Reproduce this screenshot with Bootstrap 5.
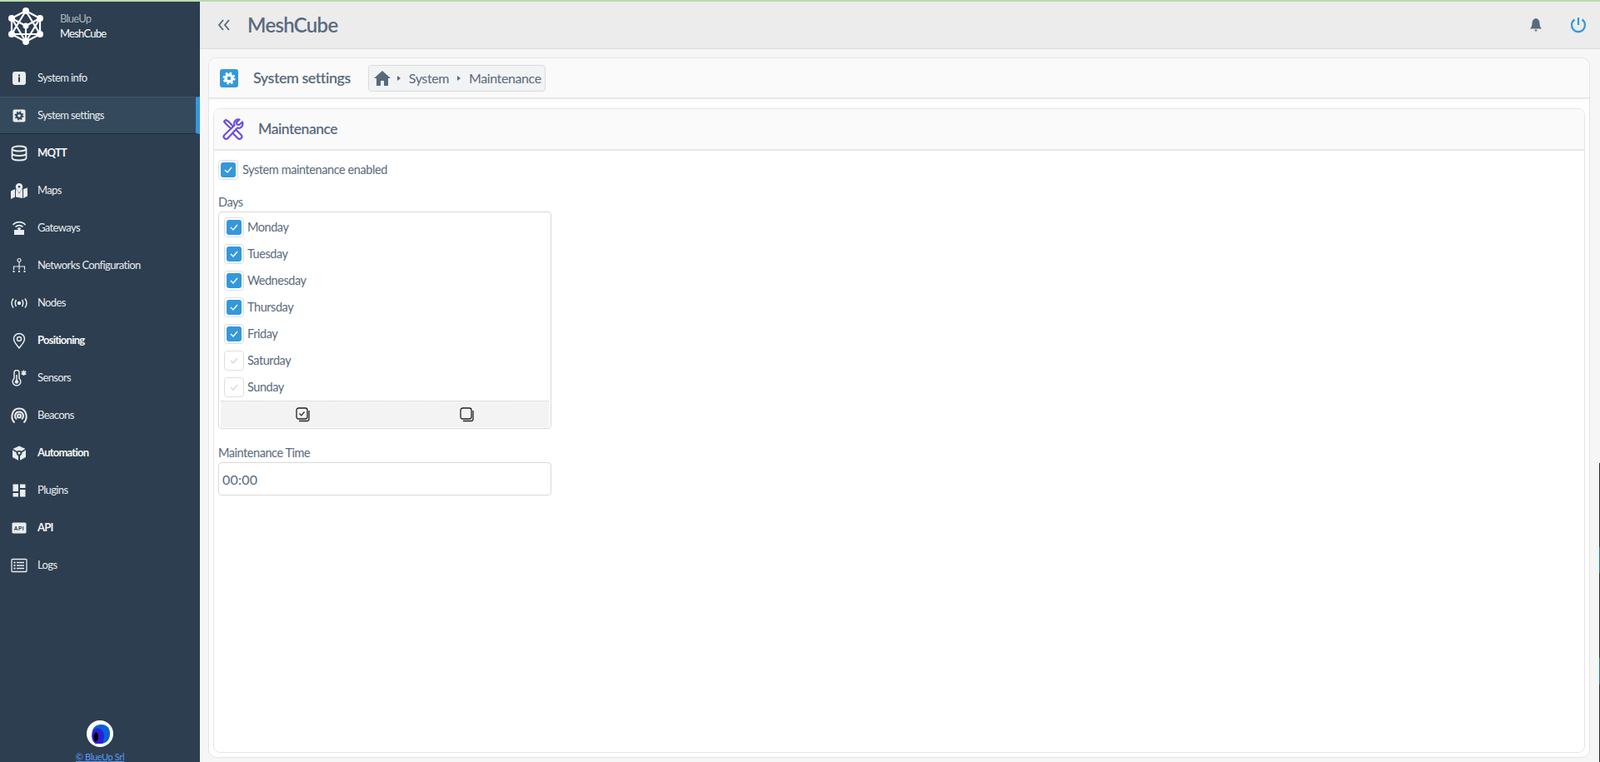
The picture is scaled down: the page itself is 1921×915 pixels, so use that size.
<!DOCTYPE html>
<html lang="en">
<head>
<meta charset="utf-8">
<title>MeshCube</title>
<link href="https://cdn.jsdelivr.net/npm/bootstrap@5.3.0/dist/css/bootstrap.min.css" rel="stylesheet">
<style>
html,body{height:100%;}
body{font-family:"Lato","Liberation Sans",sans-serif;color:#5a6a7d;background:#f6f6f6;overflow:hidden;font-size:15px;border-top:2px solid #b9dbac;}
.shell{height:913px;}
.side{width:240px;background:#2c3e50;color:#fff;flex:none;}
.brand{height:58px;padding-left:9px;}
.brand-txt{font-size:13px;line-height:18px;margin-left:19px;letter-spacing:-.75px;}
.brand-top{color:#aab4bd;}
.brand-mark{width:44px;height:46px;}
.menu{margin-top:11px;}
.menu-row{height:45px;border-top:1px solid transparent;border-bottom:1px solid transparent;color:#e9ecef;font-size:13px;letter-spacing:-.62px;text-decoration:none;padding-left:13px;}
.menu-row.cur{background:#34495c;border-top-color:#41546a;border-bottom-color:#1f2f3f;border-right:5px solid #3498db;}
.menu-row.hvy{font-weight:700;color:#f4f6f7;letter-spacing:-.75px;}
.menu-ico{width:20px;height:20px;margin-right:12px;flex:none;color:#e9ecef;}
.foot{font-size:11px;line-height:12px;}
.foot a{color:#5b9cf5;letter-spacing:-.35px;margin-top:6px;}
.globe{width:32px;height:32px;border-radius:50%;background:#fff;}
.top-bar{height:57px;background:#ececec;border-bottom:1px solid #dcdde6;padding:0 16px 0 21px;flex:none;}
.app-name{font-size:24px;font-weight:600;color:#5a6a7d;margin-left:20px;letter-spacing:-.7px;}
.power-ico{margin-left:33px;}
.page-pane{padding:10px 12px 5px 10px;}
.outer-card{border:1px solid #e5e5e5;border-radius:10px;background:#fff;overflow:hidden;}
.outer-head{height:49px;background:#fafafa;border-bottom:2px solid #e6e8ec;padding-left:13px;flex:none;}
.sec-title{font-size:18px;font-weight:600;margin-left:18px;letter-spacing:-.5px;}
.crumbs{margin-left:21px;height:32px;background:#f2f3f4;border:1px solid #d9dbdd;border-radius:4px;padding:0 4px 0 6px;font-size:16px;letter-spacing:-.4px;}
.crumb-sep{width:0;height:0;border-left:4px solid #5a6a7d;border-top:3px solid transparent;border-bottom:3px solid transparent;margin:0 10px;}
.inner-pane{padding:11px 5px 5px 5px;}
.inner-card{border:1px solid #e5e5e5;border-radius:8px;background:#fff;overflow:hidden;}
.inner-head{height:50px;background:#fafafa;border-bottom:2px solid #e6e8ec;padding-left:10px;flex:none;}
.inner-title{font-size:17.5px;font-weight:600;margin-left:17px;letter-spacing:-.5px;}
.inner-body{padding:11px 5px 9px;font-size:14.5px;}
.chk-wrap{width:24px;height:24px;border:1px solid #dcdfe2;border-radius:4px;background:#fff;flex:none;}
.chk-on{width:18px;height:18px;border-radius:3px;background:#3498db;}
.master-txt{margin-left:5px;letter-spacing:-.42px;}
.fld-label{margin-top:17px;height:20px;line-height:20px;font-size:14.5px;letter-spacing:-.45px;}
.fld-label.later{margin-top:19px;}
.day-box{width:400px;border:1px solid #d9d9d9;border-radius:4px;margin-top:1px;padding:2px 2px 1px 2px;}
.day-row{height:32px;padding-left:4px;font-size:14.5px;letter-spacing:-.45px;}
.day-row .day-name{margin-left:4px;}
.day-tools{height:32px;background:#f3f3f3;border-top:1px dotted #cfcfcf;}
.day-tool{flex:1 1 0;}
.time-inp{width:400px;height:40px;border:1px solid #d9d9d9;border-radius:4px;background:#fff;padding:0 4px;font-size:16px;color:#5a6a7d;letter-spacing:.2px;margin-top:1px;}
.edge-strip{position:fixed;right:0;top:556px;bottom:0;width:1px;background:linear-gradient(#2a2a2a 0 101px,#0a6ce0 101px 132px,#2a2a2a 132px 234px,#0a6ce0 234px 266px,#2a2a2a 266px);}
</style>
</head>
<body>
<div class="shell d-flex">
<aside class="side d-flex flex-column">
 <div class="brand d-flex align-items-center">
  <svg class="brand-mark" viewBox="0 0 44 46" fill="none" stroke="#fff" stroke-width="2.200"><path d="M22 5 39 14V33L22 42 5 33V14ZM22 5 5 33H39ZM22 5 39 33M5 14 22 23 39 14M22 23V42M5 14 22 42 39 14"/><g fill="#fff" stroke="none"><circle cx="22" cy="5" r="4"/><circle cx="39" cy="14" r="4"/><circle cx="39" cy="33" r="4"/><circle cx="22" cy="42" r="4"/><circle cx="5" cy="33" r="4"/><circle cx="5" cy="14" r="4"/><circle cx="22" cy="23" r="3.500"/></g></svg>
  <div class="brand-txt"><div class="brand-top">BlueUp</div><div>MeshCube</div></div>
 </div>
 <nav class="menu d-flex flex-column">
  <a class="menu-row d-flex align-items-center"><svg class="menu-ico" viewBox="0 0 20 20"><rect x="2" y="2" width="16" height="16" rx="3" fill="currentColor"/><rect x="9" y="8.500" width="2" height="6" fill="#2c3e50"/><rect x="9" y="5.500" width="2" height="2" fill="#2c3e50"/></svg>System info</a>
  <a class="menu-row cur d-flex align-items-center"><svg class="menu-ico" viewBox="0 0 20 20"><rect x="2.500" y="2.500" width="15" height="15" rx="2" fill="currentColor"/><circle cx="10" cy="10" r="4.700" fill="none" stroke="#34495c" stroke-width="1.600" stroke-dasharray="1.840 1.840"/><circle cx="10" cy="10" r="4.200" fill="#34495c"/><circle cx="10" cy="10" r="1.800" fill="#e9ecef"/></svg>System settings</a>
  <a class="menu-row hvy d-flex align-items-center"><svg class="menu-ico" viewBox="0 0 20 20" fill="none" stroke="currentColor" stroke-width="1.800"><ellipse cx="10" cy="4.500" rx="8.500" ry="3"/><path d="M1.500 4.500V15.500C1.500 17.200 5 18.500 10 18.500S18.500 17.200 18.500 15.500V4.500M1.500 10C1.500 11.700 5 13 10 13S18.500 11.700 18.500 10"/></svg>MQTT</a>
  <a class="menu-row d-flex align-items-center"><svg class="menu-ico" viewBox="0 0 20 20" fill="currentColor"><path d="M0 10.500 5 8V17.500L0 20ZM15 8 20 6.500V16.500L15 19ZM6 8.200 7 8.700 10 13.500 13 8.700 14 8.200V19L6 17.500Z"/><path fill-rule="evenodd" d="M10 1a4.300 4.300 0 0 1 4.300 4.300c0 2-2.300 5-4.300 7.200C8 10.300 5.700 7.300 5.700 5.300A4.300 4.300 0 0 1 10 1Zm0 3a1.300 1.300 0 1 0 0 2.600 1.300 1.300 0 0 0 0-2.600Z"/></svg>Maps</a>
  <a class="menu-row d-flex align-items-center"><svg class="menu-ico" viewBox="0 0 20 20" fill="none" stroke="currentColor" stroke-width="1.700"><path d="M2.500 6C6.500 1.500 13.500 1.500 17.500 6M5.500 8.500C8 6 12 6 14.500 8.500M8 10.800C9 9.900 11 9.900 12 10.800"/><path d="M4 12H9V10.500H11V12H16V18H4Z" fill="currentColor" stroke="none"/></svg>Gateways</a>
  <a class="menu-row d-flex align-items-center"><svg class="menu-ico" viewBox="0 0 20 20" fill="none" stroke="currentColor" stroke-width="1.200"><circle cx="10" cy="3.500" r="2"/><path d="M10 5.500V11M3.500 15V11H16.500V15M10 11V15"/><g fill="currentColor" stroke="none"><rect x="2.500" y="16" width="2" height="2"/><rect x="9" y="16" width="2" height="2"/><rect x="15.500" y="16" width="2" height="2"/></g></svg>Networks Configuration</a>
  <a class="menu-row d-flex align-items-center"><svg class="menu-ico" viewBox="0 0 20 20" fill="none" stroke="currentColor" stroke-width="1.500"><circle cx="10" cy="10" r="2.200" fill="currentColor" stroke="none"/><path d="M6.500 6C5 8.500 5 11.500 6.500 14M13.500 6C15 8.500 15 11.500 13.500 14M3 4.500C.5 8 .5 12 3 15.500M17 4.500C19.500 8 19.500 12 17 15.500"/></svg>Nodes</a>
  <a class="menu-row hvy d-flex align-items-center"><svg class="menu-ico" viewBox="0 0 20 20" fill="none" stroke="currentColor" stroke-width="1.500"><path d="M10 19C6.500 14.500 3.500 11.500 3.500 8a6.500 6.500 0 0 1 13 0C16.500 11.500 13.500 14.500 10 19Z"/><circle cx="10" cy="8" r="2.500"/></svg>Positioning</a>
  <a class="menu-row d-flex align-items-center"><svg class="menu-ico" viewBox="0 0 20 20" fill="none" stroke="currentColor" stroke-width="1.500"><path d="M4 3.500a3 3 0 0 1 6 0V10.500a4.800 4.800 0 1 1-6 0Z"/><path d="M7 6V14"/><circle cx="7" cy="14.500" r="2.200" fill="currentColor" stroke="none"/><path d="M15.500 .5V7M12.700 2 18.300 5.500M18.300 2 12.700 5.500" stroke-width="1.500"/></svg>Sensors</a>
  <a class="menu-row d-flex align-items-center"><svg class="menu-ico" viewBox="0 0 20 20" fill="none" stroke="currentColor" stroke-width="2"><path d="M4.500 18.500C-1 13.500 1 1.500 10 1.500S21 13.500 15.500 18.500M7 14.500C3.500 11.500 5 5.500 10 5.500S16.500 11.500 13 14.500"/><circle cx="10" cy="10.500" r="2"/></svg>Beacons</a>
  <a class="menu-row hvy d-flex align-items-center"><svg class="menu-ico" viewBox="0 0 20 20" fill="currentColor"><path d="M10 1.500 17.500 5 12.800 7.700C11 6.700 9 6.700 7.200 7.700L2.500 5ZM2 6.500 6.500 9.200C6.500 11 7.500 12.500 9 13.500V18.800L2 15ZM18 6.500V15L11 18.800V13.500C12.500 12.500 13.500 11 13.500 9.200Z"/><circle cx="10" cy="10" r="1.500"/></svg>Automation</a>
  <a class="menu-row d-flex align-items-center"><svg class="menu-ico" viewBox="0 0 20 20" fill="currentColor"><rect x="2.500" y="2.500" width="6.500" height="8.500"/><rect x="11" y="2.500" width="6.500" height="4.500"/><rect x="2.500" y="13" width="6.500" height="4.500"/><rect x="11" y="9" width="6.500" height="8.500"/></svg>Plugins</a>
  <a class="menu-row hvy d-flex align-items-center"><svg class="menu-ico" viewBox="0 0 20 20"><rect x="1.500" y="3.500" width="17" height="13" rx="1.500" fill="#e9ecef"/><text x="10" y="12.800" text-anchor="middle" font-size="6.500" font-weight="700" font-family="Liberation Sans,sans-serif" fill="#2c3e50" letter-spacing=".5">API</text></svg>API</a>
  <a class="menu-row d-flex align-items-center"><svg class="menu-ico" viewBox="0 0 20 20" fill="none" stroke="currentColor" stroke-width="1.300"><rect x="1" y="2.500" width="18" height="15" rx="1"/><path d="M7 6.500H16M7 10H16M7 13.500H16" stroke-width="1.600"/><g fill="currentColor" stroke="none"><rect x="3.500" y="5.500" width="2" height="2"/><rect x="3.500" y="9" width="2" height="2"/><rect x="3.500" y="12.500" width="2" height="2"/></g></svg>Logs</a>
 </nav>
 <div class="foot mt-auto text-center d-flex flex-column align-items-center">
  <div class="globe d-flex align-items-center justify-content-center"><svg width="25" height="25" viewBox="0 0 25 25"><path d="M3 8C5 2 10 1 14 1 21 1 24 6 24 12 24 19 20 24 13 24H7C3 22 2 14 3 8Z" fill="#0a60d8"/><path d="M3 10C5 4 15 3 17 14 17 18 16 22 15 24H7C3 22 1 16 3 10Z" fill="#2a1fd8"/><path d="M6 11C8 9 10 12 10 16 10 20 8 22 6 21 4 19 4 13 6 11Z" fill="#000"/></svg></div>
  <a href="#">© BlueUp Srl</a>
 </div>
</aside>
<main class="flex-grow-1 d-flex flex-column">
 <header class="top-bar d-flex align-items-center">
  <svg width="16" height="14" viewBox="0 0 16 14" fill="none" stroke="#5a6a7d" stroke-width="1.900"><path d="M7 1 2 7 7 13M14 1 9 7 14 13"/></svg>
  <div class="app-name">MeshCube</div>
  <svg class="ms-auto" width="16" height="18" viewBox="0 0 16 18" fill="#5a6a7d"><path d="M8 1C5 1.500 3.500 4 3.500 7 3.500 10 2.500 12 1 13.500H15C13.500 12 12.500 10 12.500 7 12.500 4 11 1.500 8 1Z"/><rect x="6.500" y="14.500" width="3" height="2" rx="1"/></svg>
  <svg class="power-ico" width="20" height="20" viewBox="0 0 20 20" fill="none" stroke="#3498db" stroke-width="2.200"><path d="M5.500 3.500a8 8 0 1 0 9 0M10 1V10"/></svg>
 </header>
 <div class="page-pane flex-grow-1 d-flex flex-column">
  <div class="outer-card flex-grow-1 d-flex flex-column">
   <div class="outer-head d-flex align-items-center">
    <svg width="22" height="22" viewBox="0 0 22 22"><rect x="0" y="0" width="22" height="22" rx="3" fill="#3498db"/><circle cx="11" cy="11" r="6.300" fill="none" stroke="#fff" stroke-width="2.400" stroke-dasharray="2.470 2.470"/><circle cx="11" cy="11" r="5.700" fill="#fff"/><circle cx="11" cy="11" r="2.300" fill="#3498db"/></svg>
    <div class="sec-title">System settings</div>
    <div class="crumbs d-flex align-items-center">
     <svg width="20" height="18" viewBox="0 0 20 18" fill="#5a6a7d"><path d="M10 0 20 9H17V18H12V12H8V18H3V9H0Z"/></svg>
     <span class="crumb-sep ms-2"></span><span>System</span><span class="crumb-sep"></span><span>Maintenance</span>
    </div>
   </div>
   <div class="inner-pane flex-grow-1 d-flex flex-column">
    <div class="inner-card flex-grow-1 d-flex flex-column">
     <div class="inner-head d-flex align-items-center">
      <svg width="26" height="26" viewBox="0 0 26 26" fill="none" stroke="#6a4ee0" stroke-width="2.200" stroke-linejoin="round" stroke-linecap="round"><path d="M2 4 4 2 7.500 4 13.500 10.500 11 13 5 7.500Z"/><path d="M15.500 13 22.500 20A2.800 2.800 0 0 1 18.500 24L11.500 17"/><path d="M24 4.500 20 8 17.500 7.500 17 5 20.500 1.500C16.500 .5 13 4 14.500 8.500L2.500 20A2.800 2.800 0 0 0 6.500 24L18 11.500C22 13 25.500 9 24 4.500Z" fill="#fafafa"/></svg>
      <div class="inner-title">Maintenance</div>
     </div>
     <div class="inner-body">
      <div class="d-flex align-items-center">
       <span class="chk-wrap d-flex align-items-center justify-content-center"><span class="chk-on d-flex align-items-center justify-content-center"><svg width="10" height="8" viewBox="0 0 10 8" fill="none" stroke="#fff" stroke-width="1.400"><path d="M1 4 4 7 9 1"/></svg></span></span>
       <span class="master-txt">System maintenance enabled</span>
      </div>
      <div class="fld-label">Days</div>
      <div class="day-box">
       <div class="day-row d-flex align-items-center"><span class="chk-wrap d-flex align-items-center justify-content-center"><span class="chk-on d-flex align-items-center justify-content-center"><svg width="10" height="8" viewBox="0 0 10 8" fill="none" stroke="#fff" stroke-width="1.400"><path d="M1 4 4 7 9 1"/></svg></span></span><span class="day-name">Monday</span></div>
       <div class="day-row d-flex align-items-center"><span class="chk-wrap d-flex align-items-center justify-content-center"><span class="chk-on d-flex align-items-center justify-content-center"><svg width="10" height="8" viewBox="0 0 10 8" fill="none" stroke="#fff" stroke-width="1.400"><path d="M1 4 4 7 9 1"/></svg></span></span><span class="day-name">Tuesday</span></div>
       <div class="day-row d-flex align-items-center"><span class="chk-wrap d-flex align-items-center justify-content-center"><span class="chk-on d-flex align-items-center justify-content-center"><svg width="10" height="8" viewBox="0 0 10 8" fill="none" stroke="#fff" stroke-width="1.400"><path d="M1 4 4 7 9 1"/></svg></span></span><span class="day-name">Wednesday</span></div>
       <div class="day-row d-flex align-items-center"><span class="chk-wrap d-flex align-items-center justify-content-center"><span class="chk-on d-flex align-items-center justify-content-center"><svg width="10" height="8" viewBox="0 0 10 8" fill="none" stroke="#fff" stroke-width="1.400"><path d="M1 4 4 7 9 1"/></svg></span></span><span class="day-name">Thursday</span></div>
       <div class="day-row d-flex align-items-center"><span class="chk-wrap d-flex align-items-center justify-content-center"><span class="chk-on d-flex align-items-center justify-content-center"><svg width="10" height="8" viewBox="0 0 10 8" fill="none" stroke="#fff" stroke-width="1.400"><path d="M1 4 4 7 9 1"/></svg></span></span><span class="day-name">Friday</span></div>
       <div class="day-row d-flex align-items-center"><span class="chk-wrap d-flex align-items-center justify-content-center"><svg width="10" height="8" viewBox="0 0 10 8" fill="none" stroke="#d5d8db" stroke-width="1.400"><path d="M1 4 4 7 9 1"/></svg></span><span class="day-name">Saturday</span></div>
       <div class="day-row d-flex align-items-center"><span class="chk-wrap d-flex align-items-center justify-content-center"><svg width="10" height="8" viewBox="0 0 10 8" fill="none" stroke="#d5d8db" stroke-width="1.400"><path d="M1 4 4 7 9 1"/></svg></span><span class="day-name">Sunday</span></div>
       <div class="day-tools d-flex">
        <div class="day-tool d-flex align-items-center justify-content-center"><svg width="18" height="18" viewBox="0 0 18 18" fill="none" stroke="#222" stroke-width="1.300"><rect x="1" y="1" width="13" height="13" rx="2.500" fill="#f3f3f3"/><path d="M16 4V14A2.500 2.500 0 0 1 13.500 16.500H4"/><path d="M4.500 7.500 6.800 9.800 10.500 5.500" stroke-width="1.200"/></svg></div>
        <div class="day-tool d-flex align-items-center justify-content-center"><svg width="18" height="18" viewBox="0 0 18 18" fill="none" stroke="#222" stroke-width="1.300"><rect x="1" y="1" width="13" height="13" rx="2.500" fill="#f3f3f3"/><path d="M16 4V14A2.500 2.500 0 0 1 13.500 16.500H4"/></svg></div>
       </div>
      </div>
      <div class="fld-label later">Maintenance Time</div>
      <input class="time-inp d-block" value="00:00">
     </div>
    </div>
   </div>
  </div>
 </div>
</main>
</div>
<div class="edge-strip"></div>
<script src="https://cdn.jsdelivr.net/npm/bootstrap@5.3.0/dist/js/bootstrap.bundle.min.js"></script>
</body>
</html>
